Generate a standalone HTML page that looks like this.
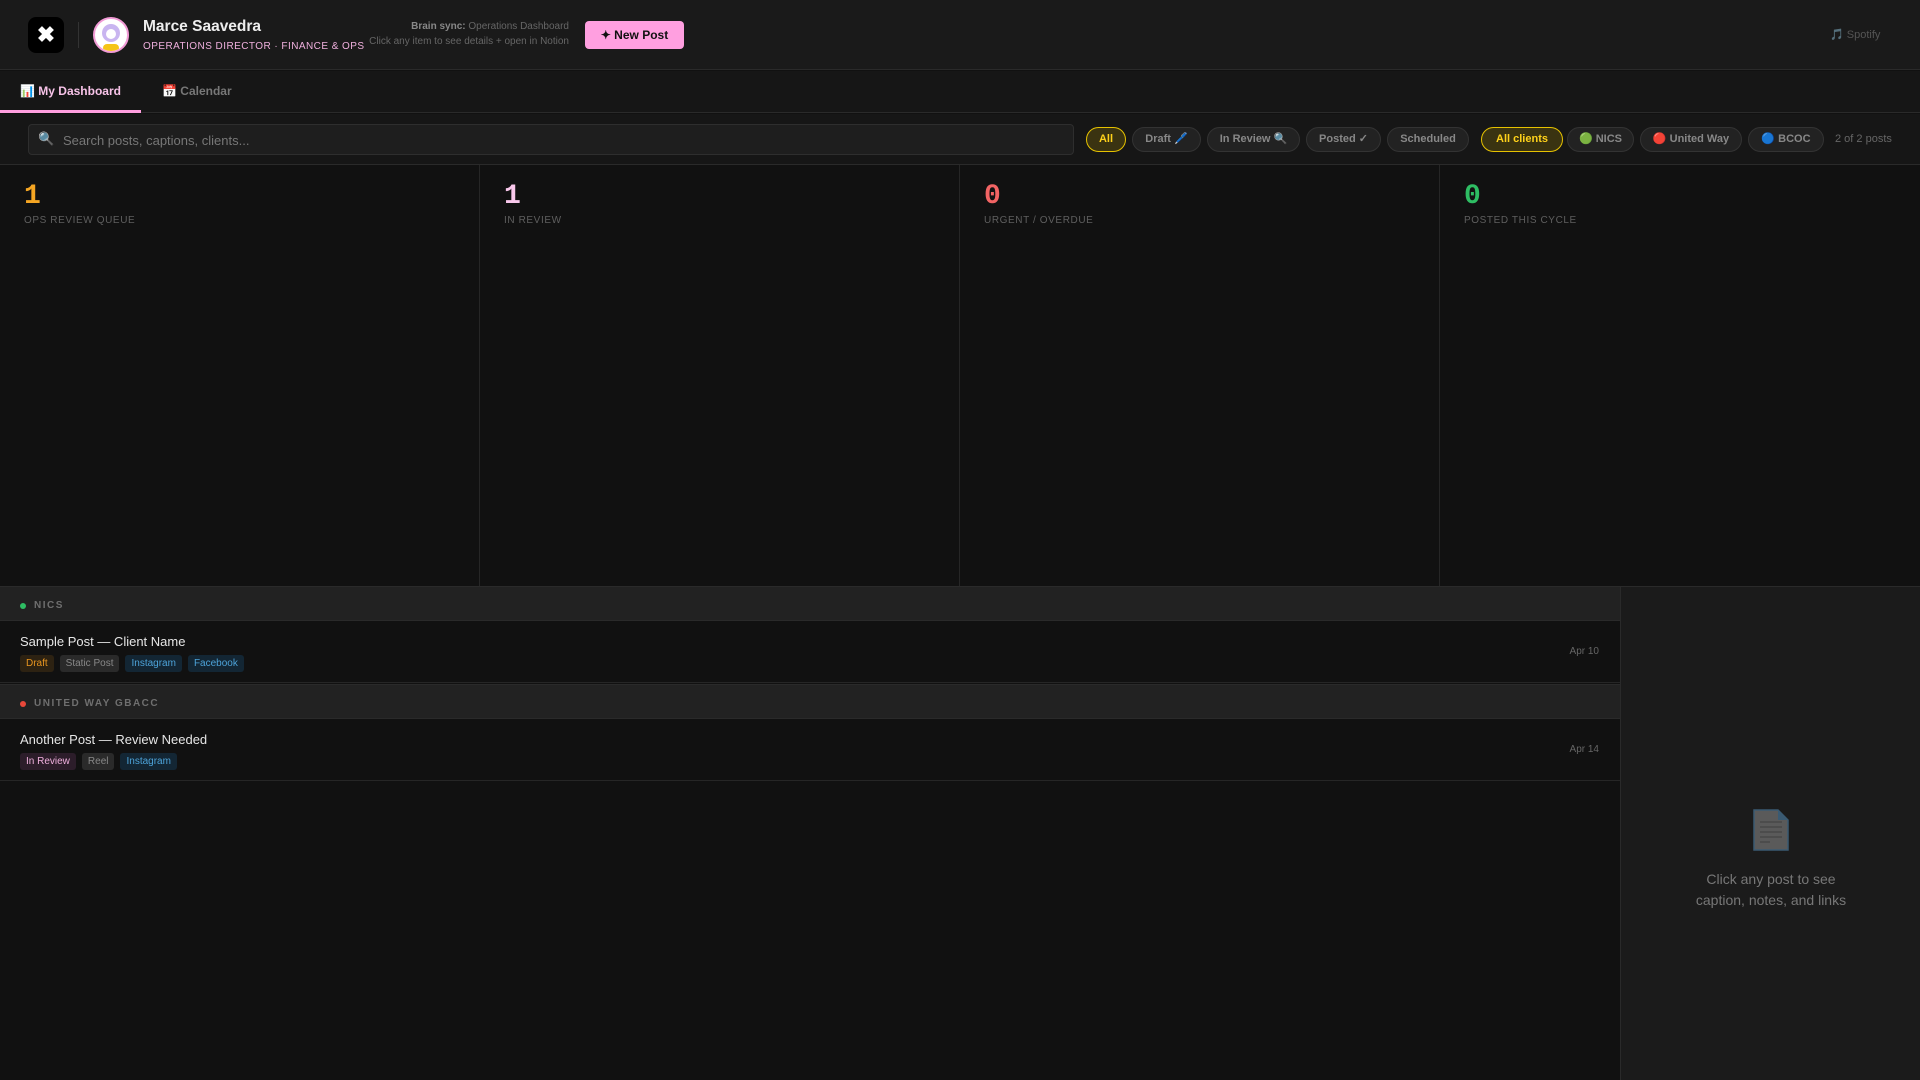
<!DOCTYPE html>
<html><head><meta charset="utf-8">
<style>
*{box-sizing:border-box;margin:0;padding:0}
body{width:1920px;height:1080px;background:#111;font-family:"Liberation Sans",sans-serif;color:#ddd;overflow:hidden;position:relative}
.abs{position:absolute}
.header{left:0;top:0;width:1920px;height:70px;background:#1a1a1a;border-bottom:1px solid #2a2a2a}
.logo{left:28px;top:17px;width:36px;height:36px;background:#000;border-radius:8px;color:#fff;font-size:22px;font-weight:bold;text-align:center;line-height:36px}
.vdiv{left:78px;top:22px;width:1px;height:26px;background:#333}
.avatar{left:93px;top:17px;width:36px;height:36px;border-radius:50%;background:#fff;border:2px solid #f29bd6;overflow:hidden}
.name{left:143px;top:18px;font-size:15.5px;font-weight:bold;color:#eee}
.role{left:143px;top:41px;font-size:10px;color:#f0b0de;letter-spacing:.45px;white-space:nowrap}
.sync{left:330px;width:239px;text-align:right;font-size:10px;color:#666;white-space:nowrap}
.btn{left:585px;top:21px;width:99px;height:28px;background:#ff9fe0;border-radius:4px;color:#111;font-size:12px;font-weight:bold;text-align:center;line-height:28px}
.spot{left:1830px;top:28px;font-size:11px;color:#555}
.tabs{left:0;top:71px;width:1920px;height:42px;background:#161616;border-bottom:1px solid #2a2a2a}
.tab{top:84px;font-size:12px;font-weight:bold}
.fbar{left:0;top:114px;width:1920px;height:51px;background:#161616;border-bottom:1px solid #2a2a2a}
.search{left:28px;top:124px;width:1046px;height:31px;background:#1e1e1e;border:1px solid #2e2e2e;border-radius:4px;font-size:13px;color:#777;padding:8px 0 0 34px}
.chip{top:127px;height:25px;border-radius:13px;background:#222;border:1px solid #333;font-size:11px;font-weight:bold;color:#888;text-align:center;line-height:23px}
.chip.on{background:#3a3311;border-color:#e6c200;color:#ffd21a}
.stat{top:165px;width:480px;height:421px;border-right:1px solid #262626;background:#111}
.num{position:absolute;left:24px;top:16px;font-family:"Liberation Mono",monospace;font-weight:bold;font-size:28px}
.lbl{position:absolute;left:24px;top:50px;font-size:10px;letter-spacing:.6px;color:#5f5f5f}
.ghead{left:0;width:1620px;height:35px;background:#222;border-top:1px solid #2a2a2a;border-bottom:1px solid #2a2a2a}
.dot{position:absolute;left:20px;top:16px;width:6px;height:6px;border-radius:50%}
.gt{position:absolute;left:34px;top:13px;font-size:10px;font-weight:bold;letter-spacing:1.5px;color:#6f6f6f}
.row{left:0;width:1620px;height:62px;background:#111;border-bottom:1px solid #262626}
.rt{position:absolute;left:20px;top:13px;font-size:13px;color:#e6e6e6}
.tags{position:absolute;left:20px;top:34px;display:flex;gap:6px}
.tag{font-size:10px;padding:0 6px;height:17px;line-height:17px;border-radius:3px}
.date{position:absolute;right:21px;top:25px;font-size:10px;color:#666}
.panel{left:1620px;top:586px;width:300px;height:494px;background:#1b1b1b;border-left:1px solid #2a2a2a;border-top:1px solid #2a2a2a}
</style></head><body>
<div class="abs header"></div>
<div class="abs logo">✖</div>
<div class="abs vdiv"></div>
<div class="abs avatar"><svg width="32" height="32" viewBox="0 0 32 32"><circle cx="16" cy="14" r="9" fill="#c9b5f0"/><circle cx="16" cy="15" r="5" fill="#fff"/><rect x="8" y="25" width="16" height="8" rx="4" fill="#f5c518"/></svg></div>
<div class="abs name">Marce Saavedra</div>
<div class="abs role">OPERATIONS DIRECTOR · FINANCE &amp; OPS</div>
<div class="abs sync" style="top:21px"><b style="color:#888">Brain sync:</b> Operations Dashboard</div>
<div class="abs sync" style="top:36px">Click any item to see details + open in Notion</div>
<div class="abs btn">✦ New Post</div>
<div class="abs spot">🎵 Spotify</div>

<div class="abs tabs"></div>
<div class="abs tab" style="left:20px;color:#f7c3e8">📊 My Dashboard</div>
<div class="abs tab" style="left:162px;color:#777">📅 Calendar</div>
<div class="abs" style="left:0;top:110px;width:141px;height:3px;background:#ff9fe0"></div>

<div class="abs fbar"></div>
<div class="abs search"><span style="position:absolute;left:9px;top:6px;font-size:13px">🔍</span>Search posts, captions, clients...</div>
<div class="abs chip on" style="left:1086px;width:40px">All</div>
<div class="abs chip" style="left:1132px;width:69px">Draft 🖊️</div>
<div class="abs chip" style="left:1207px;width:93px">In Review 🔍</div>
<div class="abs chip" style="left:1306px;width:75px">Posted ✓</div>
<div class="abs chip" style="left:1387px;width:82px">Scheduled</div>
<div class="abs chip on" style="left:1481px;width:82px">All clients</div>
<div class="abs chip" style="left:1567px;width:67px">🟢 NICS</div>
<div class="abs chip" style="left:1640px;width:102px">🔴 United Way</div>
<div class="abs chip" style="left:1748px;width:76px">🔵 BCOC</div>
<div class="abs" style="left:1835px;top:133px;font-size:11px;color:#666">2 of 2 posts</div>

<div class="abs stat" style="left:0"><div class="num" style="color:#f5a623">1</div><div class="lbl">OPS REVIEW QUEUE</div></div>
<div class="abs stat" style="left:480px"><div class="num" style="color:#f9c8ec">1</div><div class="lbl">IN REVIEW</div></div>
<div class="abs stat" style="left:960px"><div class="num" style="color:#f26464">0</div><div class="lbl">URGENT / OVERDUE</div></div>
<div class="abs stat" style="left:1440px;border-right:none"><div class="num" style="color:#2ebd63">0</div><div class="lbl">POSTED THIS CYCLE</div></div>

<div class="abs ghead" style="top:586px"><div class="dot" style="background:#2ebd63"></div><div class="gt">NICS</div></div>
<div class="abs row" style="top:621px"><div class="rt">Sample Post — Client Name</div>
<div class="tags"><span class="tag" style="background:#2d2212;color:#e8951f">Draft</span><span class="tag" style="background:#2a2a2a;color:#888">Static Post</span><span class="tag" style="background:#132634;color:#4da3d9">Instagram</span><span class="tag" style="background:#132634;color:#4da3d9">Facebook</span></div>
<div class="date">Apr 10</div></div>
<div class="abs ghead" style="top:684px"><div class="dot" style="background:#e8483a"></div><div class="gt">UNITED WAY GBACC</div></div>
<div class="abs row" style="top:719px"><div class="rt">Another Post — Review Needed</div>
<div class="tags"><span class="tag" style="background:#2c1d2a;color:#f0b0de">In Review</span><span class="tag" style="background:#2a2a2a;color:#888">Reel</span><span class="tag" style="background:#132634;color:#4da3d9">Instagram</span></div>
<div class="date">Apr 14</div></div>

<div class="abs panel">
<svg class="abs" style="left:132px;top:222px" width="36" height="42" viewBox="0 0 36 42"><path d="M1 1H25L35 11V41H1Z" fill="#5a5a5a" stroke="#3a5a72" stroke-width="1.5"/><path d="M25 1V11H35" fill="#3a5a72"/><path d="M7 13H29M7 18H29M7 23H29M7 28H29M7 33H17" stroke="#444" stroke-width="1.2"/></svg>
<div class="abs" style="left:0;top:282px;width:300px;text-align:center;font-size:14px;line-height:21px;color:#777">Click any post to see<br>caption, notes, and links</div>
</div>
</body></html>
